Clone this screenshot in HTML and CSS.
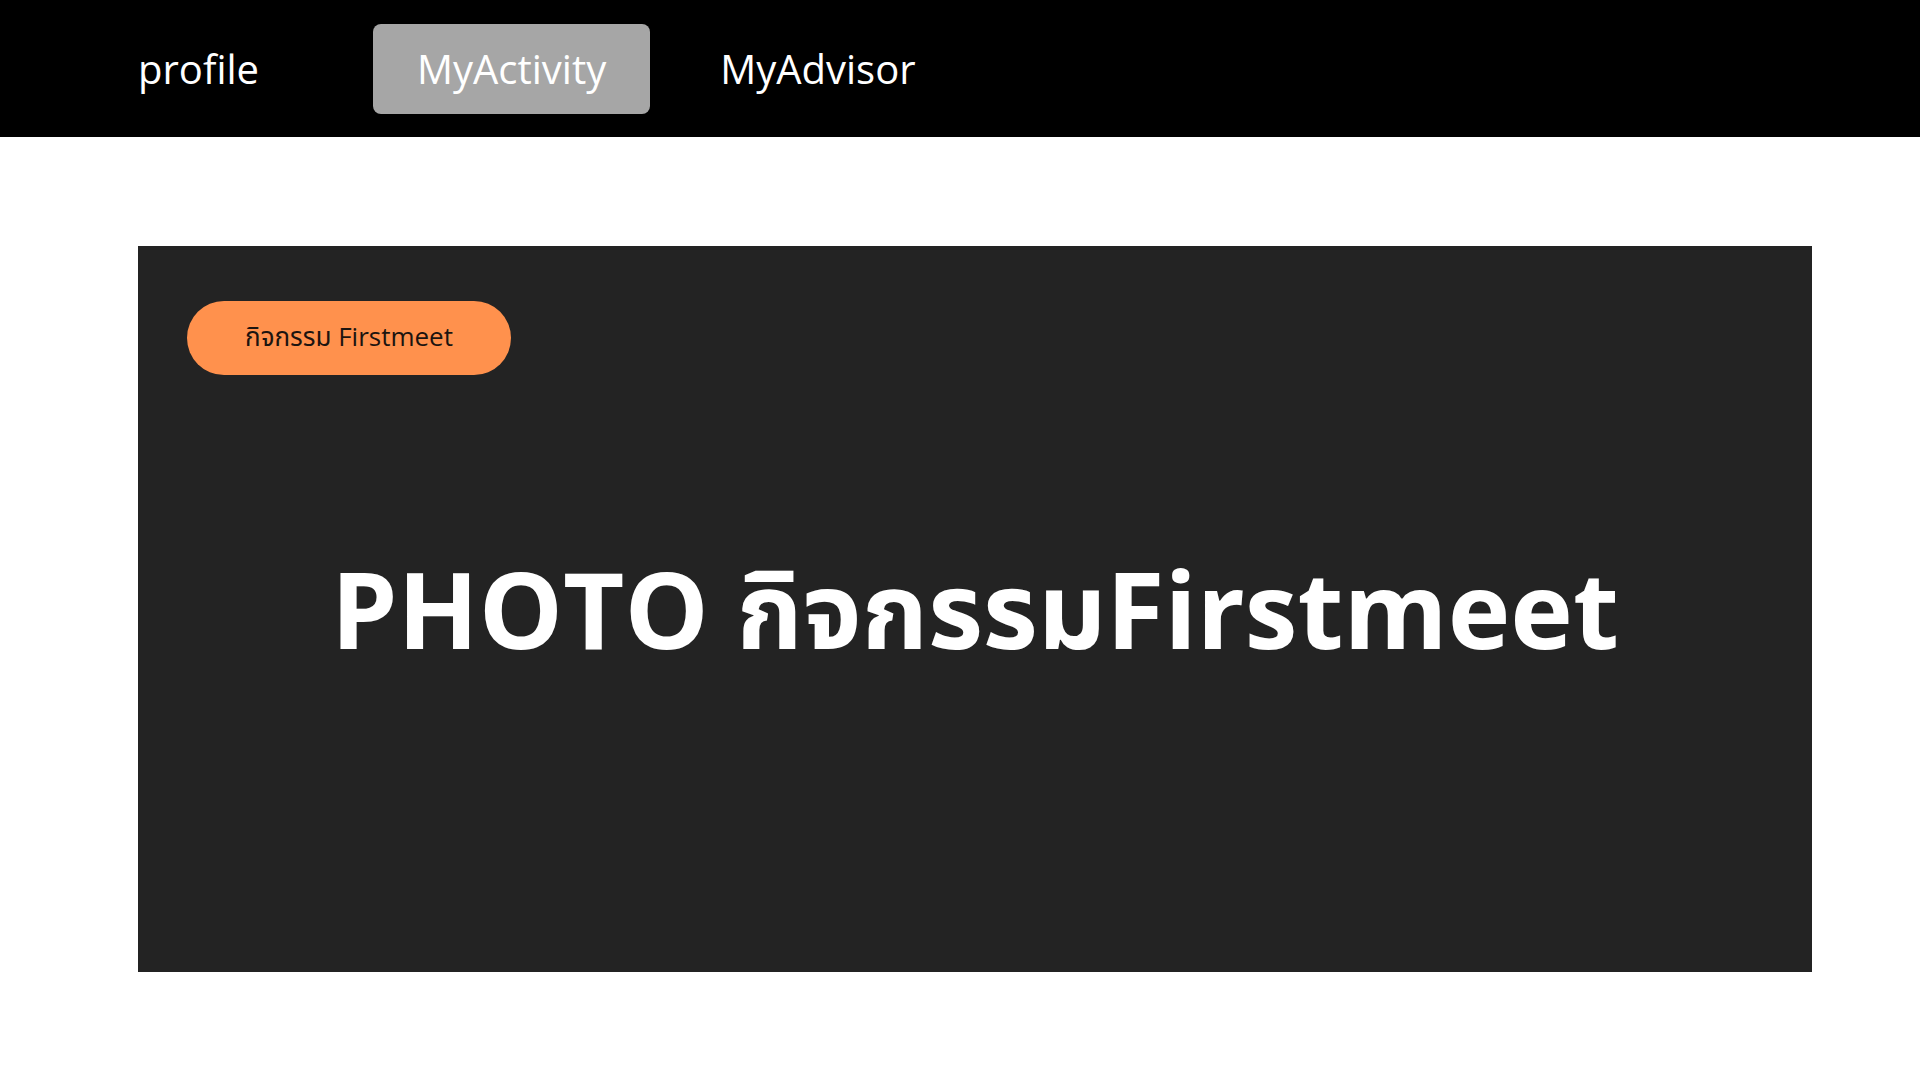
FILE: index.html
```html
<!DOCTYPE html>
<html lang="th">
<head>
<meta charset="utf-8">
<title>MyActivity</title>
<link rel="stylesheet" href="styles.css">
</head>
<body>
<nav class="topnav">
  <a class="nav-item nav-profile">profile</a>
  <a class="nav-item nav-active">MyActivity</a>
  <a class="nav-item nav-advisor">MyAdvisor</a>
</nav>
<main class="content">
  <section class="photo-card">
    <span class="badge">กิจกรรม Firstmeet</span>
    <h1 class="photo-title">PHOTO กิจกรรมFirstmeet</h1>
  </section>
</main>
</body>
</html>
```
FILE: styles.css
```css
* { box-sizing: border-box; }
html, body { margin: 0; padding: 0; }
body {
  background: #ffffff;
  font-family: "Open Sans", "Noto Sans", "Noto Sans Thai", "Loma", sans-serif;
  width: 1920px;
  height: 1080px;
}
.topnav {
  background: #000000;
  height: 137px;
  display: flex;
  align-items: center;
  padding-left: 94px;
}
.nav-item {
  display: flex;
  align-items: center;
  height: 90px;
  padding: 0 44px;
  color: #ffffff;
  font-size: 40px;
  font-weight: 400;
  border-radius: 8px;
}
.nav-active {
  background: #a6a6a6;
  margin-left: 70px;
}
.nav-advisor {
  margin-left: 26px;
}
.content {
  padding: 109px 0 0 138px;
}
.photo-card {
  position: relative;
  width: 1674px;
  height: 726px;
  background: #232323;
  display: flex;
  align-items: center;
  justify-content: center;
}
.badge {
  position: absolute;
  top: 55px;
  left: 49px;
  width: 324px;
  height: 74px;
  border-radius: 37px;
  background: #ff914d;
  color: #1c1410;
  font-size: 26px;
  display: flex;
  align-items: center;
  justify-content: center;
}
.photo-title {
  margin: 0;
  color: #ffffff;
  font-size: 106px;
  font-weight: 700;
  line-height: 1.2;
}
```
